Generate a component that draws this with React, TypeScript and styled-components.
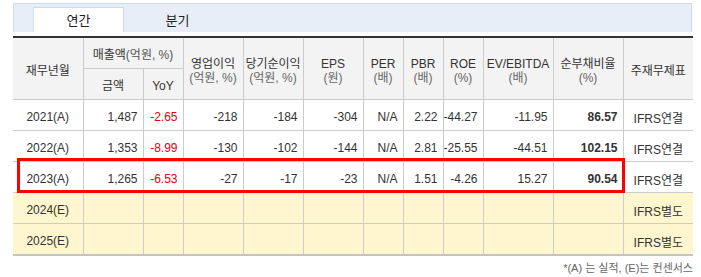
import React from "react";
import styled, { createGlobalStyle } from "styled-components";

const Global = createGlobalStyle`
  html, body { margin: 0; padding: 0; background: #fff; }
  body { font-family: "Liberation Sans", "Noto Sans CJK KR", sans-serif; color: #333; }
`;

const Page = styled.div`
  width: 701px;
  padding: 3px 8px 0 13px;
  box-sizing: border-box;
`;

const TabBar = styled.div`
  display: flex;
  align-items: flex-end;
  height: 29px;
  width: 679px;
  box-sizing: border-box;
  background: #e8eef8;
  border: 1px solid #cfdaea;
  border-bottom: none;
  padding-left: 19px;
`;

const Tab = styled.div<{ $active?: boolean }>`
  width: 91px;
  height: 25px;
  box-sizing: border-box;
  margin-right: 8px;
  display: flex;
  align-items: center;
  justify-content: center;
  font-size: 13px;
  color: #222;
  background: ${(p) => (p.$active ? "#fff" : "transparent")};
  border: 1px solid ${(p) => (p.$active ? "#cfdaea" : "transparent")};
  border-bottom: none;
  padding-bottom: 1px;
`;

const TableWrap = styled.div`
  position: relative;
  margin-top: 4px;
  width: 680px;
`;

const Table = styled.table`
  width: 680px;
  table-layout: fixed;
  border-collapse: collapse;
  border-top: 2px solid #333;
  border-bottom: 2px solid #c4c4c4;
  font-size: 12px;
`;

const Th = styled.th`
  height: 26px;
  padding: 4px 0 0 0;
  background: #f3f3f3;
  border: 1px solid #cccccc;
  border-top: none;
  font-weight: normal;
  color: #333;
  text-align: center;
  line-height: 14px;
`;

const Edge = styled(Th)`
  border-left: none;
`;

const EdgeR = styled(Th)`
  border-right: none;
`;

const Sub = styled.span`
  color: #666;
  font-size: 12px;
`;

const Small = styled.span`
  color: #555;
`;

const Tr = styled.tr<{ $est?: boolean }>`
  background: ${(p) => (p.$est ? "#fdf6cf" : "#fff")};
`;

const Td = styled.td<{ $align?: string; $red?: boolean; $bold?: boolean }>`
  height: 26px;
  padding: 4px 5px 0 0;
  border: 1px solid #cccccc;
  text-align: ${(p) => p.$align || "right"};
  color: ${(p) => (p.$red ? "#e0000b" : "#333")};
  font-weight: ${(p) => (p.$bold ? "bold" : "normal")};
  white-space: nowrap;
  &:first-child { border-left: none; padding-right: 0; }
  &:last-child { border-right: none; padding-right: 0; }
`;

const Highlight = styled.div`
  position: absolute;
  left: 4px;
  top: 122px;
  width: 608px;
  height: 35px;
  box-sizing: border-box;
  border: 3px solid #ff0000;
  pointer-events: none;
`;

const Note = styled.div`
  width: 680px;
  text-align: right;
  font-size: 11px;
  color: #666;
  margin-top: 3px;
`;

const widths = [70, 60, 40, 60, 60, 60, 40, 40, 40, 70, 70, 70];

type Row = {
  label: string;
  est?: boolean;
  vals: string[];
  type: string;
};

const rows: Row[] = [
  { label: "2021(A)", vals: ["1,487", "-2.65", "-218", "-184", "-304", "N/A", "2.22", "-44.27", "-11.95", "86.57"], type: "IFRS연결" },
  { label: "2022(A)", vals: ["1,353", "-8.99", "-130", "-102", "-144", "N/A", "2.81", "-25.55", "-44.51", "102.15"], type: "IFRS연결" },
  { label: "2023(A)", vals: ["1,265", "-6.53", "-27", "-17", "-23", "N/A", "1.51", "-4.26", "15.27", "90.54"], type: "IFRS연결" },
  { label: "2024(E)", est: true, vals: Array(10).fill(""), type: "IFRS별도" },
  { label: "2025(E)", est: true, vals: Array(10).fill(""), type: "IFRS별도" },
];

export default function App() {
  return (
    <Page>
      <Global />
      <TabBar>
        <Tab $active>연간</Tab>
        <Tab>분기</Tab>
      </TabBar>
      <TableWrap>
        <Table>
          <colgroup>
            {widths.map((w, i) => (
              <col key={i} style={{ width: w }} />
            ))}
          </colgroup>
          <thead>
            <tr>
              <Edge rowSpan={2}>재무년월</Edge>
              <Th colSpan={2}>
                매출액<Small>(억원, %)</Small>
              </Th>
              <Th rowSpan={2}>
                영업이익
                <br />
                <Sub>(억원, %)</Sub>
              </Th>
              <Th rowSpan={2}>
                당기순이익
                <br />
                <Sub>(억원, %)</Sub>
              </Th>
              <Th rowSpan={2}>
                EPS
                <br />
                <Sub>(원)</Sub>
              </Th>
              <Th rowSpan={2}>
                PER
                <br />
                <Sub>(배)</Sub>
              </Th>
              <Th rowSpan={2}>
                PBR
                <br />
                <Sub>(배)</Sub>
              </Th>
              <Th rowSpan={2}>
                ROE
                <br />
                <Sub>(%)</Sub>
              </Th>
              <Th rowSpan={2}>
                EV/EBITDA
                <br />
                <Sub>(배)</Sub>
              </Th>
              <Th rowSpan={2}>
                순부채비율
                <br />
                <Sub>(%)</Sub>
              </Th>
              <EdgeR rowSpan={2}>주재무제표</EdgeR>
            </tr>
            <tr>
              <Th>금액</Th>
              <Th>YoY</Th>
            </tr>
          </thead>
          <tbody>
            {rows.map((r) => (
              <Tr key={r.label} $est={r.est}>
                <Td $align="center">{r.label}</Td>
                {r.vals.map((v, i) => (
                  <Td key={i} $red={i === 1} $bold={i === 9}>
                    {v}
                  </Td>
                ))}
                <Td $align="center">{r.type}</Td>
              </Tr>
            ))}
          </tbody>
        </Table>
        <Highlight />
      </TableWrap>
      <Note>*(A) 는 실적, (E)는 컨센서스</Note>
    </Page>
  );
}
